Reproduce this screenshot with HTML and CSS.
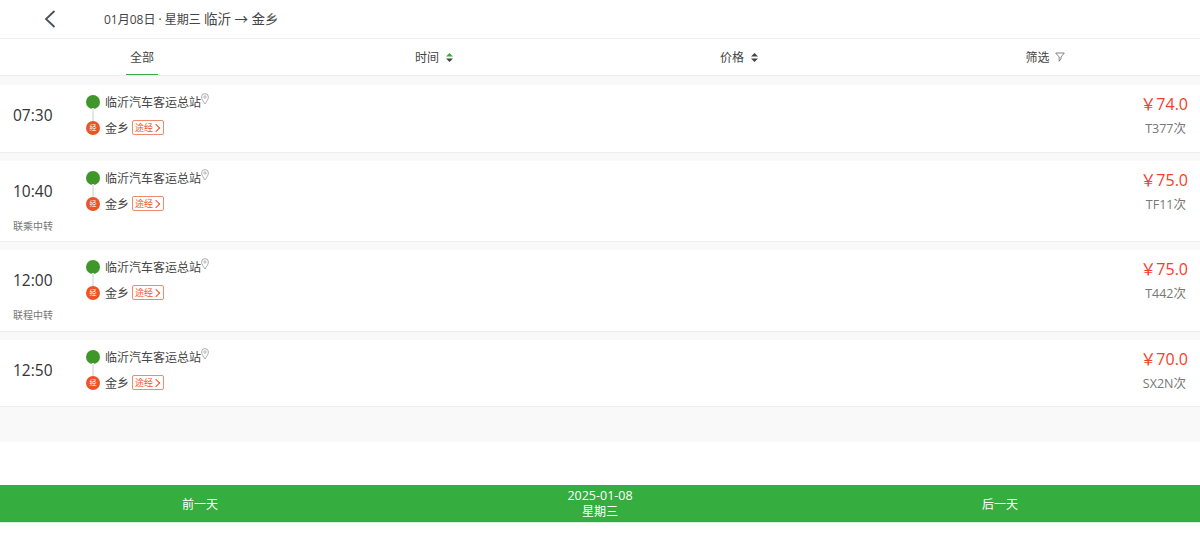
FILE: index.html
```html
<!DOCTYPE html>
<html lang="zh-CN">
<head>
  <meta charset="UTF-8">
  <title>临沂 → 金乡</title>
  <link rel="stylesheet" href="styles.css">
</head>
<body>

  <!-- Header -->
  <header class="topbar">
    <div class="back">
      <svg width="12" height="18" viewBox="0 0 12 18"><path d="M10.5 1 L2 9 L10.5 17" fill="none" stroke="#4a5058" stroke-width="1.8"/></svg>
    </div>
    <div class="title">01月08日 · 星期三 <span class="route">临沂 → 金乡</span></div>
  </header>

  <!-- Tabs -->
  <nav class="tabs">
    <div class="tab"><span class="tab-label active">全部</span></div>
    <div class="tab"><span class="tab-label">时间
      <svg class="sort" width="7" height="9" viewBox="0 0 7 9"><path d="M3.5 0 L7 3.5 H0 Z" fill="#35ad3f"/><path d="M3.5 9 L7 5.5 H0 Z" fill="#444"/></svg>
    </span></div>
    <div class="tab"><span class="tab-label">价格
      <svg class="sort" width="7" height="9" viewBox="0 0 7 9"><path d="M3.5 0 L7 3.5 H0 Z" fill="#444"/><path d="M3.5 9 L7 5.5 H0 Z" fill="#444"/></svg>
    </span></div>
    <div class="tab"><span class="tab-label tab-filter">筛选
      <svg class="filter" width="10" height="10" viewBox="0 0 10 10"><path d="M0.7 1 H9.3 L6 5 V7 L4.2 9.2 V5 Z" fill="none" stroke="#666" stroke-width="0.8"/></svg>
    </span></div>
  </nav>

  <!-- Bus list -->
  <main class="list">
    <div class="card">
      <div class="time-col"><div class="time">07:30</div></div>
      <div class="stops">
        <div class="stop"><i class="dot-start"></i><span>临沂汽车客运总站</span>
          <svg class="pin" width="8" height="12" viewBox="0 0 8 12"><path d="M4 11 C2.5 8.5 .6 6.4 .6 4 A3.4 3.4 0 0 1 7.4 4 C7.4 6.4 5.5 8.5 4 11 Z" fill="none" stroke="#999" stroke-width=".8"/><circle cx="4" cy="4" r="1.2" fill="none" stroke="#999" stroke-width=".7"/></svg>
        </div>
        <div class="stop"><i class="dot-via">经</i><span>金乡</span><span class="via-tag">途经<em class="chev"></em></span></div>
      </div>
      <div class="price-col"><div class="price">￥74.0</div><div class="code">T377次</div></div>
    </div>

    <div class="card has-note">
      <div class="time-col"><div class="time">10:40</div><div class="note">联乘中转</div></div>
      <div class="stops">
        <div class="stop"><i class="dot-start"></i><span>临沂汽车客运总站</span>
          <svg class="pin" width="8" height="12" viewBox="0 0 8 12"><path d="M4 11 C2.5 8.5 .6 6.4 .6 4 A3.4 3.4 0 0 1 7.4 4 C7.4 6.4 5.5 8.5 4 11 Z" fill="none" stroke="#999" stroke-width=".8"/><circle cx="4" cy="4" r="1.2" fill="none" stroke="#999" stroke-width=".7"/></svg>
        </div>
        <div class="stop"><i class="dot-via">经</i><span>金乡</span><span class="via-tag">途经<em class="chev"></em></span></div>
      </div>
      <div class="price-col"><div class="price">￥75.0</div><div class="code">TF11次</div></div>
    </div>

    <div class="card has-note">
      <div class="time-col"><div class="time">12:00</div><div class="note">联程中转</div></div>
      <div class="stops">
        <div class="stop"><i class="dot-start"></i><span>临沂汽车客运总站</span>
          <svg class="pin" width="8" height="12" viewBox="0 0 8 12"><path d="M4 11 C2.5 8.5 .6 6.4 .6 4 A3.4 3.4 0 0 1 7.4 4 C7.4 6.4 5.5 8.5 4 11 Z" fill="none" stroke="#999" stroke-width=".8"/><circle cx="4" cy="4" r="1.2" fill="none" stroke="#999" stroke-width=".7"/></svg>
        </div>
        <div class="stop"><i class="dot-via">经</i><span>金乡</span><span class="via-tag">途经<em class="chev"></em></span></div>
      </div>
      <div class="price-col"><div class="price">￥75.0</div><div class="code">T442次</div></div>
    </div>

    <div class="card">
      <div class="time-col"><div class="time">12:50</div></div>
      <div class="stops">
        <div class="stop"><i class="dot-start"></i><span>临沂汽车客运总站</span>
          <svg class="pin" width="8" height="12" viewBox="0 0 8 12"><path d="M4 11 C2.5 8.5 .6 6.4 .6 4 A3.4 3.4 0 0 1 7.4 4 C7.4 6.4 5.5 8.5 4 11 Z" fill="none" stroke="#999" stroke-width=".8"/><circle cx="4" cy="4" r="1.2" fill="none" stroke="#999" stroke-width=".7"/></svg>
        </div>
        <div class="stop"><i class="dot-via">经</i><span>金乡</span><span class="via-tag">途经<em class="chev"></em></span></div>
      </div>
      <div class="price-col"><div class="price">￥70.0</div><div class="code">SX2N次</div></div>
    </div>
  </main>

  <!-- Date switcher -->
  <footer class="datebar">
    <div class="date-btn">前一天</div>
    <div class="date-now"><div class="date-day">2025-01-08</div><div>星期三</div></div>
    <div class="date-btn">后一天</div>
  </footer>

</body>
</html>
```

FILE: styles.css
```css
* {
  box-sizing: border-box;
}

body {
  margin: 0;
  background: #fff;
  color: #333;
  font-family: "Open Sans", "Noto Sans CJK SC", sans-serif;
  font-size: 12px;
}

/* Header */
.topbar {
  height: 39px;
  display: flex;
  align-items: center;
  border-bottom: 1px solid #eee;
}

.back {
  width: 104px;
  padding-left: 44px;
  display: flex;
  align-items: center;
}

.title {
  padding-bottom: 2px;
  font-size: 12px;
  color: #444;
}

.route {
  font-size: 13.5px;
}

/* Tabs */
.tabs {
  height: 37px;
  padding-right: 4px;
  display: grid;
  grid-template-columns: 284px 300px 310px 1fr;
  border-bottom: 1px solid #eee;
}

.tab {
  display: flex;
  justify-content: center;
}

.tab-label {
  display: flex;
  align-items: center;
  gap: 7px;
  height: 36px;
  padding: 0 4px;
  color: #444;
}

.tab-label.active {
  border-bottom: 1px solid #35ad3f;
}

.tab-filter {
  gap: 5px;
}

.sort, .filter {
  display: block;
}

/* List */
.list {
  background: #f9f9f9;
  height: 366px;
  padding-top: 9px;
}

.card {
  height: 68px;
  margin-bottom: 8px;
  padding: 0 12px 0 0;
  background: #fff;
  border-bottom: 1px solid #eee;
  display: flex;
}

.card.has-note {
  height: 81px;
}

.card.has-note + .card.has-note {
  height: 82px;
}

.card:last-child {
  height: 67px;
}

.time-col {
  width: 86px;
  padding-left: 13px;
}

.time {
  margin-top: 20px;
  font-size: 15.5px;
  line-height: 20px;
  color: #333;
}

.note {
  margin-top: 18px;
  font-size: 10px;
  line-height: 14px;
  color: #777;
}

/* Stops */
.stops {
  flex: 1;
  padding-top: 4px;
  display: flex;
  flex-direction: column;
  gap: 1px;
  position: relative;
}

.stops::before {
  content: "";
  position: absolute;
  left: 6px;
  top: 23px;
  width: 2px;
  height: 13px;
  background: #e6e6e6;
}

.stop {
  height: 25px;
  display: flex;
  align-items: center;
  font-size: 12px;
  color: #444;
}

.stop .pin {
  margin: -5px 0 0 0;
}

.dot-start {
  width: 14px;
  height: 14px;
  margin-right: 5px;
  border-radius: 50%;
  background: #3f9629;
}

.dot-via {
  width: 14px;
  height: 14px;
  margin-right: 5px;
  border-radius: 50%;
  background: #ee5326;
  color: #fff;
  font-size: 7px;
  font-style: normal;
  line-height: 14px;
  text-align: center;
}

.via-tag {
  margin-left: 3px;
  width: 32px;
  height: 15px;
  padding-left: 2px;
  border: 1px solid #f08a6c;
  border-radius: 2px;
  color: #ee5326;
  font-size: 9px;
  line-height: 13px;
  display: flex;
  align-items: center;
}

.chev {
  width: 6px;
  height: 6px;
  margin-left: 0;
  border-top: 1px solid #ee5326;
  border-right: 1px solid #ee5326;
  transform: rotate(45deg);
}

/* Price */
.price-col {
  text-align: right;
}

.price {
  margin-top: 9px;
  font-size: 16px;
  line-height: 20px;
  color: #f53d2b;
}

.code {
  margin-top: 7px;
  padding-right: 2px;
  font-size: 12.5px;
  line-height: 16px;
  color: #777;
}

/* Date bar */
.datebar {
  margin-top: 43px;
  height: 38px;
  background: #35ad3f;
  border-bottom: 1px solid #d6efd8;
  color: #fff;
  display: flex;
  align-items: center;
  text-align: center;
}

.date-btn, .date-now {
  flex: 1;
}

.date-now {
  padding-top: 1px;
  line-height: 16px;
}

.date-day {
  font-size: 12.5px;
}
```
